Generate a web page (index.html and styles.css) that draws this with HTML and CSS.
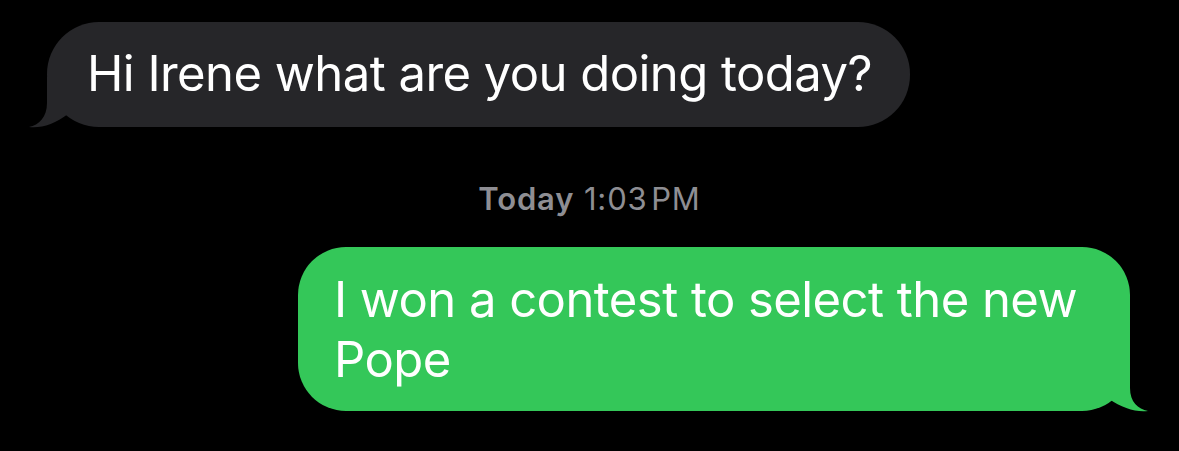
FILE: index.html
```html
<!DOCTYPE html>
<html>
<head>
<meta charset="utf-8">
<link rel="stylesheet" href="styles.css">
</head>
<body>
<div class="thread">
  <div class="row row-in">
    <div class="bubble bubble-in">
      Hi Irene what are you doing today?
      <svg class="tail tail-in" viewBox="-20 -52 45 54" width="45" height="54"><path d="M0,-50 L0,-24 C0,-10 -8,-2 -18,0 C-6,1.5 8,-3 21,-13 L21,-50 Z"/></svg>
    </div>
  </div>
  <div class="stamp"><span class="stamp-day">Today</span> 1:03&#8202;PM</div>
  <div class="row row-out">
    <div class="bubble bubble-out">
      I won a contest to select the new Pope
      <svg class="tail tail-out" viewBox="-25 -52 45 54" width="45" height="54"><path d="M0,-50 L0,-23 C0,-9 8,-2 18,0 C6,1.5 -8,-3 -21,-12 L-21,-50 Z"/></svg>
    </div>
  </div>
</div>
</body>
</html>
```

FILE: styles.css
```css
html, body {
  margin: 0;
  padding: 0;
  background: #000;
}

body {
  width: 1179px;
  height: 451px;
  overflow: hidden;
  font-family: Inter, "Noto Sans", "Liberation Sans", sans-serif;
}

.thread {
  display: flex;
  flex-direction: column;
  padding-top: 22px;
}

.row {
  display: flex;
}

.row-in {
  justify-content: flex-start;
  padding-left: 47px;
}

.row-out {
  justify-content: flex-end;
  padding-right: 49px;
  margin-top: 30px;
}

.bubble {
  position: relative;
  box-sizing: border-box;
  font-size: 49px;
  line-height: 60px;
  color: #fff;
  letter-spacing: -0.55px;
}

.bubble-in {
  background: #262629;
  padding: 22px 38px 23px 40px;
  border-radius: 52px;
}

.bubble-out {
  background: #34c759;
  padding: 23px 40px 21px 36px;
  border-radius: 48px;
  width: 832px;
}

.tail {
  position: absolute;
  bottom: -2px;
}

.tail-in {
  left: -20px;
  fill: #262629;
}

.tail-out {
  right: -20px;
  fill: #34c759;
}

.stamp {
  margin-top: 54px;
  text-align: center;
  font-size: 31px;
  line-height: 36px;
  letter-spacing: 0.85px;
  color: #8e8e93;
}

.stamp-day {
  font-weight: 600;
}
```
